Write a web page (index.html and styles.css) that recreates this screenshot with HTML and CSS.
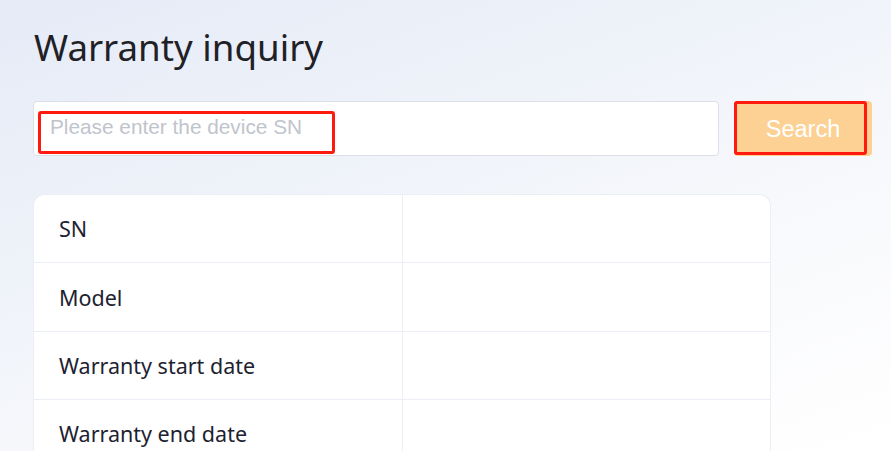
FILE: index.html
```html
<!DOCTYPE html>
<html lang="en">
<head>
<meta charset="utf-8">
<title>Warranty inquiry</title>
<link rel="stylesheet" href="styles.css">
</head>
<body>
<main class="page">
  <h1 class="title">Warranty inquiry</h1>
  <div class="search-row">
    <div class="input-wrap">
      <input class="sn-input" type="text" placeholder="Please enter the device SN">
      <span class="mark mark-input"></span>
    </div>
    <div class="btn-wrap">
      <button class="search-btn" type="button">Search</button>
      <span class="mark mark-btn"></span>
    </div>
  </div>
  <div class="result">
    <div class="row"><div class="cell label">SN</div><div class="cell value"></div></div>
    <div class="row"><div class="cell label">Model</div><div class="cell value"></div></div>
    <div class="row"><div class="cell label">Warranty start date</div><div class="cell value"></div></div>
    <div class="row"><div class="cell label">Warranty end date</div><div class="cell value"></div></div>
  </div>
</main>
</body>
</html>
```
FILE: styles.css
```css
html, body {
  margin: 0;
  height: 100%;
}
body {
  background: linear-gradient(160deg, #e5ebf7 0%, #eef2f9 35%, #f8f9fc 65%, #ffffff 100%);
  font-family: "Noto Sans", "Open Sans", sans-serif;
  color: #222630;
  overflow: hidden;
}
.page {
  padding: 22px 19px 0 33px;
}
.title {
  margin: 0 0 0 1px;
  font-weight: 400;
  font-size: 36.7px;
  line-height: 50px;
  color: #1f2126;
}
.search-row {
  display: flex;
  gap: 15px;
  margin-top: 29px;
}
.input-wrap {
  position: relative;
  width: 686px;
}
.sn-input {
  box-sizing: border-box;
  width: 100%;
  height: 55px;
  border: 1px solid #dcdfe6;
  border-radius: 4px;
  background: #fff;
  padding: 0 16px 4px;
  font-family: "Liberation Sans", Arial, sans-serif;
  font-size: 20.8px;
  outline: none;
}
.sn-input::placeholder {
  color: #c0c4cc;
}
.btn-wrap {
  position: relative;
  width: 138px;
}
.search-btn {
  width: 100%;
  height: 55px;
  border: none;
  border-radius: 4px;
  background: #fdd194;
  color: #fff;
  font-family: "Liberation Sans", Arial, sans-serif;
  font-size: 23.5px;
  padding: 2px 0 0 0;
}
.mark {
  position: absolute;
  box-sizing: border-box;
  border: 3px solid #ff1a10;
  border-radius: 3px;
  pointer-events: none;
}
.mark-input {
  left: 5px;
  top: 10px;
  width: 297px;
  height: 43px;
}
.mark-btn {
  left: 0;
  top: 0;
  width: 133px;
  height: 54px;
}
.result {
  margin-top: 38px;
  width: 738px;
  box-sizing: border-box;
  border: 1px solid #ebeef5;
  border-bottom: none;
  border-radius: 12px 12px 0 0;
  background: #fff;
  overflow: hidden;
}
.row {
  display: grid;
  grid-template-columns: 369px 1fr;
  box-sizing: border-box;
  height: 68.4px;
  border-bottom: 1px solid #ebeef5;
}
.cell {
  display: flex;
  align-items: center;
}
.label {
  padding-left: 25px;
  font-size: 21.5px;
  color: #1d2230;
  border-right: 1px solid #ebeef5;
}
```
